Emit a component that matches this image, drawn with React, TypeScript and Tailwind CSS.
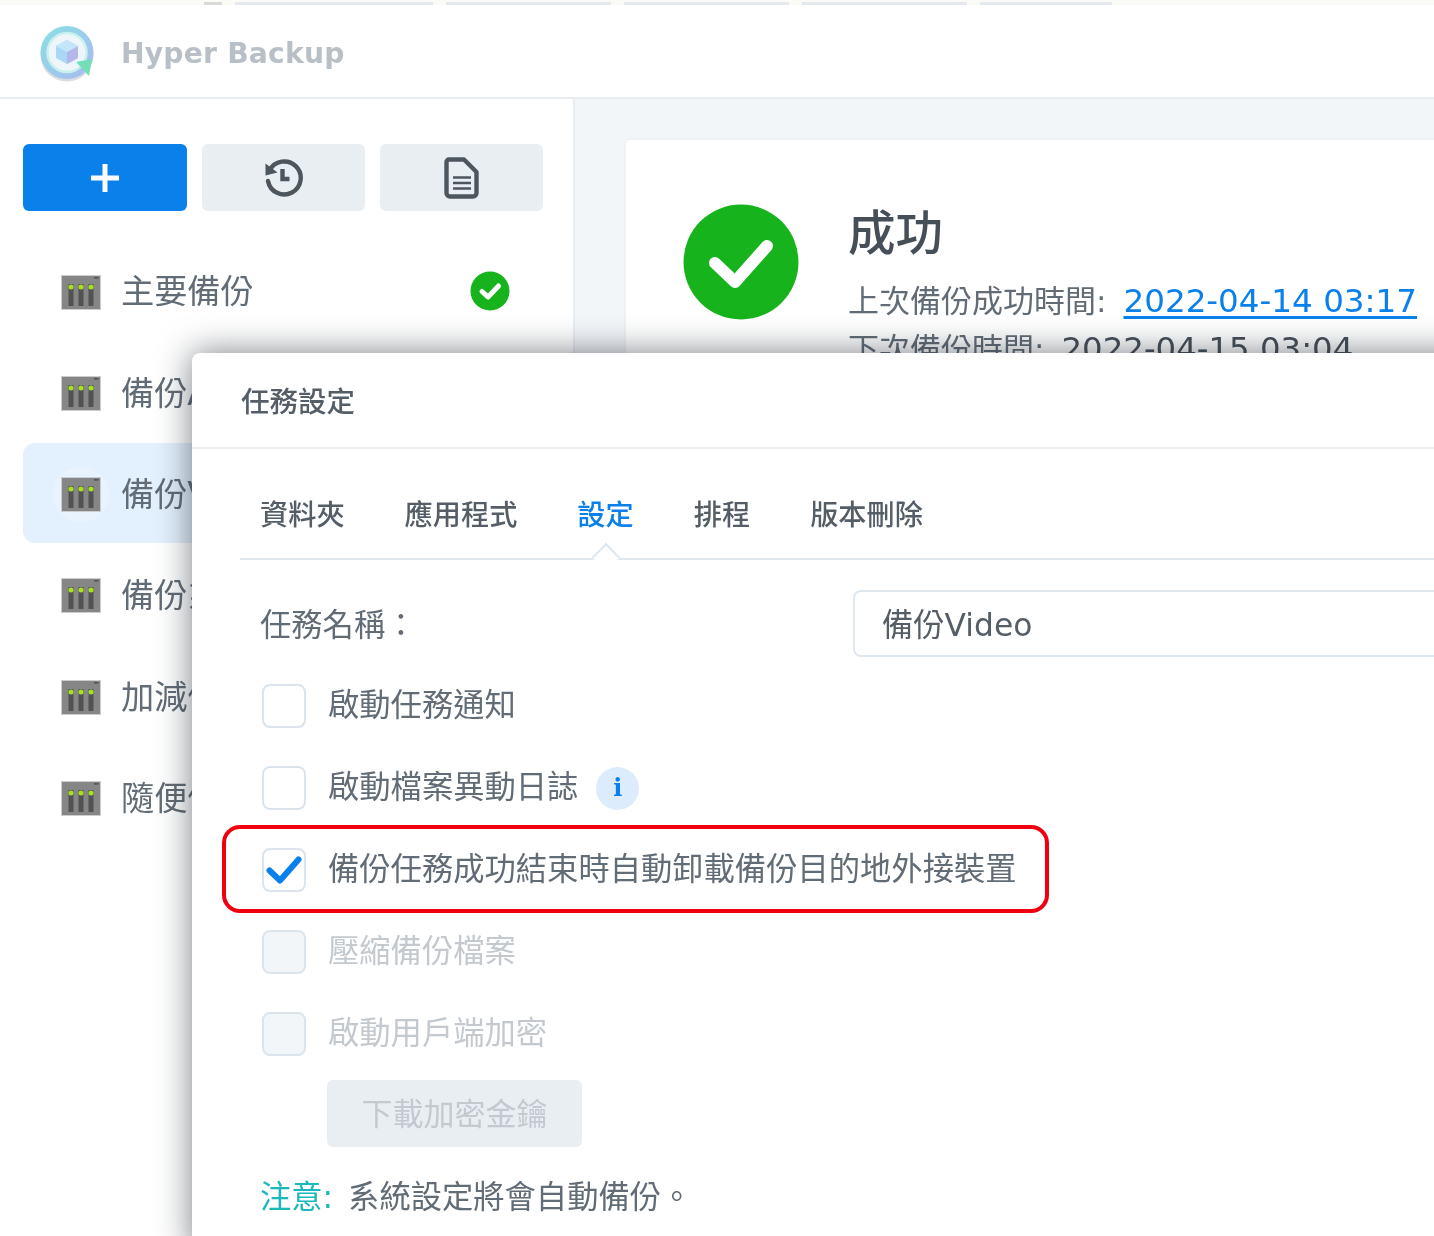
const cjk = "font-['DejaVu_Sans','Noto_Sans_CJK_TC',sans-serif]";

function NasIcon() {
  return (
    <svg width="40" height="35" viewBox="0 0 40 35" className="relative shrink-0">
      <rect x="0.5" y="0.5" width="39" height="34" fill="#868686" stroke="#c9ced3" strokeWidth="1" />
      <rect x="33" y="2" width="4.5" height="1.6" fill="#555" />
      {[10, 20, 30].map((x) => (
        <g key={x}>
          <rect x={x - 2.5} y="9" width="5" height="22" fill="#525252" />
          <circle cx={x} cy="12" r="2.5" fill="#a8e21a" />
        </g>
      ))}
    </svg>
  );
}

function Row({ name, selected, ok }: { name: string; selected?: boolean; ok?: boolean }) {
  return (
    <div className={`flex h-[100px] items-center rounded-xl pl-[38px] pr-[33px] pt-[4px] ${selected ? "bg-[#e3f0fd]" : ""}`}>
      <div className="relative flex h-[35px] w-[40px] shrink-0 items-center justify-center">
        {selected && <span className="absolute -inset-x-[8px] -inset-y-[10px] rounded-full bg-[#e9f3fd]" />}
        <NasIcon />
      </div>
      <span className="ml-[20px] flex-1 text-[33.2px] leading-none text-[#626c76]">{name}</span>
      {ok && (
        <svg width="40" height="40" viewBox="0 0 40 40" className="-translate-y-[1px]">
          <circle cx="20" cy="20" r="19.5" fill="#16b31c" />
          <path d="M12 20.5l6 5.5 10.5-11" fill="none" stroke="#fff" strokeWidth="5" strokeLinecap="round" strokeLinejoin="round" />
        </svg>
      )}
    </div>
  );
}

function Check({ label, checked, disabled, info }: { label: string; checked?: boolean; disabled?: boolean; info?: boolean }) {
  return (
    <div className="flex h-[82px] items-center pl-[22px]">
      <div className={`flex h-[44px] w-[44px] shrink-0 items-center justify-center rounded-lg border-2 border-[#dbe4ed] ${disabled ? "bg-[#f3f6f9]" : "bg-white"}`}>
        {checked && (
          <svg width="36" height="30" viewBox="0 0 36 30">
            <path d="M3.5 15.5l10.5 10 18.5-21" fill="none" stroke="#0a80ea" strokeWidth="6" strokeLinecap="round" strokeLinejoin="round" />
          </svg>
        )}
      </div>
      <span className={`ml-[22px] text-[31.3px] leading-none ${disabled ? "text-[#c3c9cf]" : "text-[#626c76]"}`}>{label}</span>
      {info && (
        <span className="ml-[18px] flex h-[43px] w-[43px] items-center justify-center rounded-full bg-[#ddecfc] font-['DejaVu_Serif',serif] text-[24px] font-bold leading-none text-[#0a80ea]">
          i
        </span>
      )}
    </div>
  );
}

export default function App() {
  return (
    <div className={`relative h-[1236px] w-[1434px] overflow-hidden bg-white blur-[0.7px] ${cjk}`}>
      {/* browser strip */}
      <div className="flex h-[5px] items-end gap-[13px] bg-[#fafaf7] pl-[204px]">
        <div className="h-[3px] w-[18px] bg-[#d9d9d6]" />
        {[198, 165, 165, 165, 132].map((w, i) => (
          <div key={i} className="h-[3px] bg-[#e4e9ee]" style={{ width: w }} />
        ))}
      </div>

      {/* title bar */}
      <header className="flex h-[94px] items-center border-b-2 border-[#e8edf2] pl-[40px] pt-[5px]">
        <svg width="56" height="58" viewBox="0 0 56 58" className="shrink-0">
          <defs>
            <linearGradient id="ring" x1="0" y1="0" x2="1" y2="1">
              <stop offset="0" stopColor="#8be0e6" />
              <stop offset="1" stopColor="#aab9f0" />
            </linearGradient>
          </defs>
          <circle cx="27" cy="30" r="26.5" fill="#b9c0c7" opacity="0.55" />
          <circle cx="27" cy="27.5" r="26.5" fill="url(#ring)" />
          <circle cx="27" cy="27.5" r="19.5" fill="#eef6fb" stroke="#c8f0ee" strokeWidth="2.5" />
          <path d="M27 15l11 6v12l-11 6-11-6V21z" fill="#a9d8f5" />
          <path d="M27 27l11-6v12l-11 6z" fill="#b7b6ec" />
          <path d="M27 27L16 21l11-6 11 6z" fill="#c3e6f8" />
          <path d="M36 37L52 34L49 51Z" fill="#72dfb8" />
        </svg>
        <span className="ml-[25px] mt-[2px] text-[28.2px] font-bold leading-none tracking-[0.2px] text-[#b8bfc6]">Hyper Backup</span>
      </header>

      <div className="flex h-[1137px]">
        {/* sidebar */}
        <aside className="w-[575px] shrink-0 border-r-2 border-[#e8edf2] pl-[23px] pr-[30px] pt-[45px]">
          <div className="flex gap-[15px]">
            <button className="flex h-[67px] w-[164px] items-center justify-center rounded-md bg-[#0a80ea]">
              <svg width="32" height="32" viewBox="0 0 32 32">
                <path d="M16 2v28M2 16h28" stroke="#fff" strokeWidth="5" />
              </svg>
            </button>
            <button className="flex h-[67px] w-[163px] items-center justify-center rounded-md bg-[#e9eef3]">
              <svg width="40" height="40" viewBox="0 0 40 40" className="-translate-x-[1px] -translate-y-[1px]">
                <path d="M6.5 13.5A16.5 16.5 0 1 1 5 24" fill="none" stroke="#4d555d" strokeWidth="4.4" strokeLinecap="round" />
                <path d="M2.5 6.5l12 9-12 3z" fill="#4d555d" />
                <path d="M19.5 12v10h7" fill="none" stroke="#4d555d" strokeWidth="4.4" />
              </svg>
            </button>
            <button className="flex h-[67px] w-[163px] items-center justify-center rounded-md bg-[#e9eef3]">
              <svg width="36" height="42" viewBox="0 0 36 42">
                <path d="M5 2.5h15l12.5 12.5v21a3.5 3.5 0 0 1-3.5 3.5H6a3.5 3.5 0 0 1-3.5-3.5V5A2.5 2.5 0 0 1 5 2.5z" fill="none" stroke="#4d555d" strokeWidth="4.4" strokeLinejoin="round" />
                <path d="M9 20.5h18M9 26h18M9 31.5h18" stroke="#4d555d" strokeWidth="2.6" />
              </svg>
            </button>
          </div>
          <div className="mt-[29px] flex flex-col gap-[1.3px]">
            <Row name="主要備份" ok />
            <Row name="備份App" />
            <Row name="備份Video" selected />
            <Row name="備份系統" />
            <Row name="加減備份" />
            <Row name="隨便備份" />
          </div>
        </aside>

        {/* content */}
        <main className="flex-1 bg-[#f3f6f9] pl-[49px] pt-[39px]">
          <section className="flex h-[400px] rounded-l-md border-2 border-r-0 border-[#eef2f6] bg-white pl-[57px] pt-[64px]">
            <svg width="116" height="116" viewBox="0 0 116 116" className="shrink-0">
              <circle cx="58" cy="58" r="57.5" fill="#16b31c" />
              <path d="M32 59l20 19 32-36" fill="none" stroke="#fff" strokeWidth="12" strokeLinecap="round" strokeLinejoin="round" />
            </svg>
            <div className="ml-[49px]">
              <h1 className="text-[47.5px] font-medium leading-[60px] text-[#464f58]">成功</h1>
              <p className="mt-[13px] flex items-baseline text-[31px] leading-[48px] text-[#626c76]">
                上次備份成功時間:
                <span className="ml-[17px] text-[32.6px] text-[#0a80ea] underline underline-offset-[4px]">2022-04-14 03:17</span>
              </p>
              <p className="text-[31px] leading-[48px] text-[#626c76]">
                下次備份時間:
                <span className="ml-[17px] text-[32.4px] text-[#464f58]">2022-04-15 03:04</span>
              </p>
            </div>
          </section>
        </main>
      </div>

      {/* dialog */}
      <div className="absolute left-[192px] top-[353px] h-[900px] w-[1300px] rounded-lg bg-white shadow-[0_0_34px_rgba(30,38,48,0.6)]">
        <div className="flex h-[96px] items-center border-b-2 border-[#e8edf2] pl-[49px] pt-[7px] text-[28.5px] font-medium leading-none text-[#555e67]">
          任務設定
        </div>
        <div className="ml-[48px] mt-[2px]">
          <nav className="relative flex h-[109px] items-center gap-[60px] border-b-2 border-[#dfe7ef] pl-[20px] pt-[24px] text-[28.2px] font-medium leading-none text-[#555e67]">
            <span>資料夾</span>
            <span>應用程式</span>
            <span className="text-[#0a80ea]">設定</span>
            <span>排程</span>
            <span>版本刪除</span>
            <div className="absolute bottom-[-9px] left-[356px] h-[20px] w-[20px] rotate-45 border-l-2 border-t-2 border-[#dfe7ef] bg-white" />
          </nav>
          <div className="flex h-[97px] items-center pl-[20px] pt-[29px]">
            <span className="mt-[6px] w-[593px] text-[31.3px] leading-none text-[#626c76]">任務名稱：</span>
            <div className="flex h-[67px] flex-1 items-center rounded-l-lg border-2 border-r-0 border-[#dfe7ef] pl-[27px] pt-[5px] text-[31.3px] leading-none text-[#555e67]">
              備份Video
            </div>
          </div>
          <div className="mt-[8px]">
            <Check label="啟動任務通知" />
            <Check label="啟動檔案異動日誌" info />
            <Check label="備份任務成功結束時自動卸載備份目的地外接裝置" checked />
            <Check label="壓縮備份檔案" disabled />
            <Check label="啟動用戶端加密" disabled />
          </div>
          <div className="ml-[87px] mt-[5px] flex h-[67px] w-[255px] items-center justify-center rounded-md bg-[#e9eef3] pt-[2px] text-[31px] leading-none text-[#c3c9cf]">
            下載加密金鑰
          </div>
          <p className="ml-[20px] mt-[35px] text-[31.3px] leading-none text-[#626c76]">
            <span className="mr-[5px] text-[#1ab7bd]">注意:</span> 系統設定將會自動備份。
          </p>
        </div>

        {/* red highlight */}
        <div className="absolute left-[30px] top-[472px] h-[88px] w-[827px] rounded-[18px] border-[4px] border-[#f0000f]" />
      </div>
    </div>
  );
}
